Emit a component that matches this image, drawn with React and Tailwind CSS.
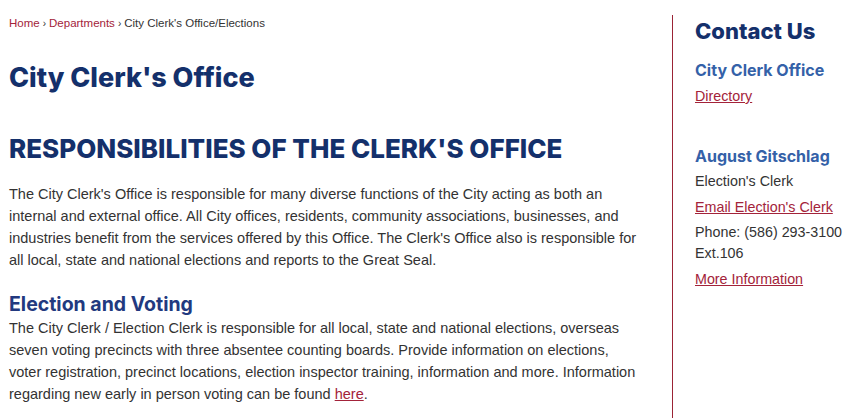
import React from "react";

const heading = "font-['Inter',sans-serif]";
const body = "font-['Liberation_Sans',Arial,sans-serif]";

function Crumbs() {
  return (
    <nav className={`${body} text-[11.5px] text-[#333]`}>
      <a href="#" className="text-[#a3233a]">Home</a>
      <span className="mx-[3px] text-[10px]">›</span>
      <a href="#" className="text-[#a3233a]">Departments</a>
      <span className="mx-[3px] text-[10px]">›</span>
      <span>City Clerk's Office/Elections</span>
    </nav>
  );
}

function Sidebar() {
  return (
    <aside className="w-[190px] shrink-0 border-l border-[#9b2335] pl-[22px] pt-[1px]">
      <h2 className={`${heading} text-[22px] font-extrabold leading-[30px] text-[#14306b]`}>
        Contact Us
      </h2>
      <div className={`${body} text-[14.3px] text-[#333] leading-[21px]`}>
        <h3 className={`${heading} mt-[13px] text-[16px] font-bold text-[#3461a8] leading-[22px]`}>
          City Clerk Office
        </h3>
        <a href="#" className="mt-[5px] block text-[#a3233a] underline">Directory</a>

        <h3 className={`${heading} mt-[38px] text-[16px] font-bold text-[#3461a8] leading-[22px]`}>
          August Gitschlag
        </h3>
        <p className="mt-[4px]">Election's Clerk</p>
        <a href="#" className="mt-[5px] block text-[#a3233a] underline">Email Election's Clerk</a>
        <p className="mt-[4px]">Phone: (586) 293-3100 Ext.106</p>
        <a href="#" className="mt-[5px] block text-[#a3233a] underline">More Information</a>
      </div>
    </aside>
  );
}

export default function App() {
  return (
    <div className="flex min-h-[418px] w-[862px] bg-white pt-[15px]">
      <main className="w-[648px] shrink-0 pl-[9px]">
        <Crumbs />
        <h1 className={`${heading} mt-[29px] text-[27px] font-extrabold leading-[34px] text-[#14306b]`}>
          City Clerk's Office
        </h1>
        <h2 className={`${heading} mt-[37px] text-[26px] font-extrabold leading-[34px] text-[#14306b]`}>
          RESPONSIBILITIES OF THE CLERK'S OFFICE
        </h2>
        <p className={`${body} mt-[17px] text-[14.5px] leading-[22px] text-[#333]`}>
          The City Clerk's Office is responsible for many diverse functions of the City acting as both an
          <br />
          internal and external office. All City offices, residents, community associations, businesses, and
          <br />
          industries benefit from the services offered by this Office. The Clerk's Office also is responsible for
          <br />
          all local, state and national elections and reports to the Great Seal.
        </p>
        <h3 className={`${heading} mt-[20px] text-[19.5px] font-bold leading-[26px] text-[#22397f]`}>
          Election and Voting
        </h3>
        <p className={`${body} text-[14.5px] leading-[22px] text-[#333]`}>
          The City Clerk / Election Clerk is responsible for all local, state and national elections, overseas
          <br />
          seven voting precincts with three absentee counting boards. Provide information on elections,
          <br />
          voter registration, precinct locations, election inspector training, information and more. Information
          <br />
          regarding new early in person voting can be found{" "}
          <a href="#" className="text-[#a3233a] underline">here</a>.
        </p>
      </main>
      <div className="w-[24px] shrink-0" />
      <Sidebar />
    </div>
  );
}
